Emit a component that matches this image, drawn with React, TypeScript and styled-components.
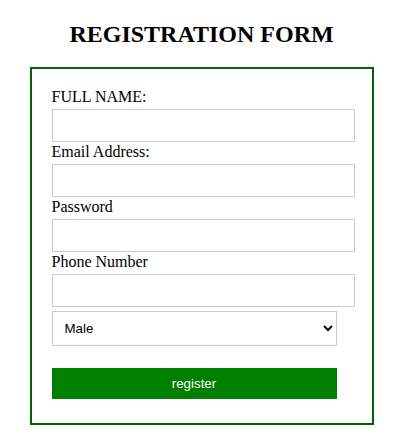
import styled, { createGlobalStyle } from "styled-components";

const GlobalStyle = createGlobalStyle`
  body {
    margin: 0;
    background: #ffffff;
    font-family: "Liberation Serif", "Times New Roman", serif;
    color: #000000;
  }
`;

const Title = styled.h2`
  margin: 20px 0 19px;
  text-align: center;
  font-size: 24px;
  font-weight: bold;
  line-height: 28px;
`;

const Form = styled.form`
  width: 344px;
  box-sizing: border-box;
  margin: 0 auto;
  border: 2px solid #006400;
  padding: 19px 17px 24px 20px;
`;

const Label = styled.label`
  display: block;
  font-size: 16px;
  line-height: 18px;
`;

const Input = styled.input`
  display: block;
  box-sizing: border-box;
  width: 303px;
  height: 33px;
  margin: 3px 0 1px;
  padding: 0 8px;
  border: 1px solid #cccccc;
  font-family: "Liberation Sans", Arial, sans-serif;
  font-size: 13.33px;
  outline: none;
`;

const Select = styled.select`
  display: block;
  box-sizing: border-box;
  width: 285px;
  height: 35px;
  margin: 4px 0 0;
  padding: 0 8px;
  border: 1px solid #cccccc;
  border-radius: 0;
  background: #ffffff;
  color: #000000;
  font-family: "Liberation Sans", Arial, sans-serif;
  font-size: 13.33px;
`;

const Button = styled.button`
  display: block;
  width: 285px;
  height: 31px;
  margin-top: 22px;
  border: none;
  background: #008000;
  color: #ffffff;
  font-family: "Liberation Sans", Arial, sans-serif;
  font-size: 13.33px;
  cursor: pointer;
`;

const fields = [
  { label: "FULL NAME:", type: "text" },
  { label: "Email Address:", type: "email" },
  { label: "Password", type: "password" },
  { label: "Phone Number", type: "tel" },
];

export default function App() {
  return (
    <>
      <GlobalStyle />
      <Title>REGISTRATION FORM</Title>
      <Form onSubmit={(e) => e.preventDefault()}>
        {fields.map((f) => (
          <div key={f.label}>
            <Label>{f.label}</Label>
            <Input type={f.type} />
          </div>
        ))}
        <Select defaultValue="Male">
          <option>Male</option>
          <option>Female</option>
        </Select>
        <Button type="submit">register</Button>
      </Form>
    </>
  );
}
